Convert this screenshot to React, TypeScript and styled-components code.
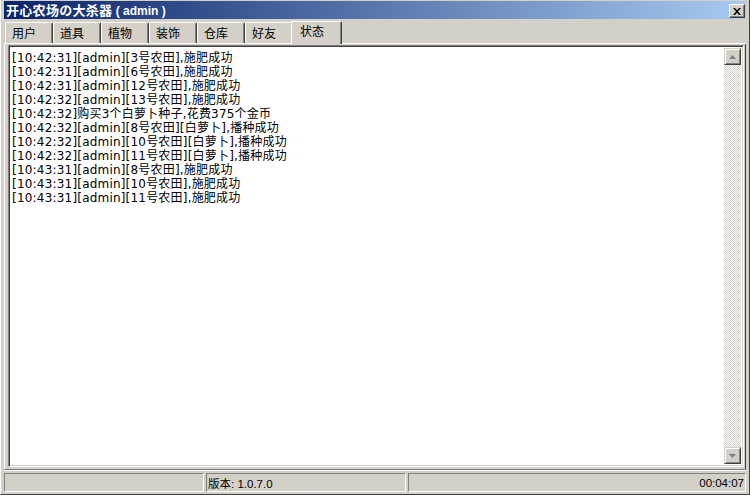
import React from "react";
import styled, { createGlobalStyle, css } from "styled-components";

const GlobalStyle = createGlobalStyle`
  html, body {
    margin: 0;
    padding: 0;
    background: #d4d0c8;
  }
  * {
    box-sizing: border-box;
  }
`;

const TABS = ["用户", "道具", "植物", "装饰", "仓库", "好友", "状态"];
const ACTIVE_TAB = 6;

const LOG_LINES = [
  "[10:42:31][admin][3号农田],施肥成功",
  "[10:42:31][admin][6号农田],施肥成功",
  "[10:42:31][admin][12号农田],施肥成功",
  "[10:42:32][admin][13号农田],施肥成功",
  "[10:42:32]购买3个白萝卜种子,花费375个金币",
  "[10:42:32][admin][8号农田][白萝卜],播种成功",
  "[10:42:32][admin][10号农田][白萝卜],播种成功",
  "[10:42:32][admin][11号农田][白萝卜],播种成功",
  "[10:43:31][admin][8号农田],施肥成功",
  "[10:43:31][admin][10号农田],施肥成功",
  "[10:43:31][admin][11号农田],施肥成功",
];

const raised = css`
  border-top: 1px solid #ffffff;
  border-left: 1px solid #ffffff;
  border-right: 1px solid #404040;
  border-bottom: 1px solid #404040;
  box-shadow: inset -1px -1px 0 #808080;
`;

const App: React.FC = () => {
  return (
    <>
      <GlobalStyle />
      <Window>
        <TitleBar>
          <Title>
            开心农场の大杀器 <TitleUser>( admin )</TitleUser>
          </Title>
          <CloseButton aria-label="close">
            <svg width="8" height="7" viewBox="0 0 8 7">
              <path d="M0 0h2l2 2.2L6 0h2L5 3.5 8 7H6L4 4.8 2 7H0l3-3.5z" fill="#000" />
            </svg>
          </CloseButton>
        </TitleBar>

        <TabStrip>
          {TABS.map((t, i) => (
            <Tab key={t} $active={i === ACTIVE_TAB}>
              {t}
            </Tab>
          ))}
        </TabStrip>

        <Panel>
          <LogBox>
            <LogText>
              {LOG_LINES.map((line, i) => (
                <LogLine key={i}>{line}</LogLine>
              ))}
            </LogText>
            <ScrollBar>
              <ScrollButton>
                <svg width="7" height="4" viewBox="0 0 7 4">
                  <path d="M3.5 0L7 4H0z" fill="#808080" />
                </svg>
              </ScrollButton>
              <ScrollTrack />
              <ScrollButton>
                <svg width="7" height="4" viewBox="0 0 7 4">
                  <path d="M0 0h7L3.5 4z" fill="#808080" />
                </svg>
              </ScrollButton>
            </ScrollBar>
          </LogBox>
        </Panel>

        <StatusBar>
          <StatusPane $width={200} />
          <StatusPane $width={200}>版本: 1.0.7.0</StatusPane>
          <StatusPane $align="right">00:04:07</StatusPane>
        </StatusBar>
      </Window>
    </>
  );
};

export default App;

const Window = styled.div`
  width: 750px;
  height: 495px;
  display: flex;
  flex-direction: column;
  padding: 1px 3px 1px 3px;
  background: #d4d0c8;
  border-left: 1px solid #ffffff;
  border-right: 1px solid #404040;
  border-bottom: 1px solid #404040;
  font-family: "DejaVu Sans", "Noto Sans CJK SC", sans-serif;
  font-size: 12px;
  color: #000;
`;

const TitleBar = styled.div`
  height: 18px;
  flex: none;
  display: flex;
  align-items: center;
  justify-content: space-between;
  padding: 0 1px 0 2px;
  background: linear-gradient(to right, #0a246a, #a6caf0);
`;

const Title = styled.div`
  color: #ffffff;
  font-family: "Noto Sans CJK SC", sans-serif;
  font-weight: 700;
  font-size: 13px;
  line-height: 18px;
  letter-spacing: 0.3px;
  white-space: nowrap;
`;

const TitleUser = styled.span`
  font-family: "Liberation Sans", "Noto Sans CJK SC", sans-serif;
  font-size: 12px;
  letter-spacing: 0;
`;

const CloseButton = styled.div`
  width: 16px;
  height: 14px;
  margin-top: 2px;
  display: flex;
  align-items: center;
  justify-content: center;
  background: #d4d0c8;
  ${raised};
`;

const TabStrip = styled.div`
  height: 25px;
  flex: none;
  display: flex;
  align-items: flex-end;
  padding-left: 1px;
  border-bottom: 1px solid #ffffff;
`;

const Tab = styled.div<{ $active?: boolean }>`
  position: relative;
  width: ${(p) => (p.$active ? 51 : 48)}px;
  height: ${(p) => (p.$active ? 23 : 21)}px;
  margin: 0 ${(p) => (p.$active ? -1 : 0)}px ${(p) => (p.$active ? -1 : 0)}px
    ${(p) => (p.$active ? -2 : 0)}px;
  z-index: ${(p) => (p.$active ? 1 : 0)};
  display: flex;
  align-items: center;
  padding-left: ${(p) => (p.$active ? 8 : 6)}px;
  padding-bottom: ${(p) => (p.$active ? 4 : 1)}px;
  background: #d4d0c8;
  border-top: 1px solid #ffffff;
  border-left: 1px solid #ffffff;
  border-right: 1px solid #404040;
  border-radius: 2px 2px 0 0;
  box-shadow: inset -1px 0 0 #808080;
  font-family: "Noto Sans CJK SC", sans-serif;
  font-size: 12px;
  line-height: 14px;
`;

const Panel = styled.div`
  flex: 1;
  min-height: 0;
  display: flex;
  padding: 1px 1px 2px 3px;
  border-left: 1px solid #ffffff;
  border-right: 1px solid #404040;
`;

const LogBox = styled.div`
  flex: 1;
  display: flex;
  background: #ffffff;
  border-top: 1px solid #808080;
  border-left: 1px solid #808080;
  border-right: 1px solid #ffffff;
  border-bottom: 1px solid #ffffff;
  box-shadow: inset 1px 1px 0 #404040, inset -1px -1px 0 #d4d0c8;
  padding: 2px;
`;

const LogText = styled.div`
  flex: 1;
  padding: 3px 0 0 1px;
  overflow: hidden;
`;

const LogLine = styled.div`
  font-family: "DejaVu Sans", "Noto Sans CJK SC", sans-serif;
  font-size: 12px;
  line-height: 14px;
  letter-spacing: 0.2px;
  white-space: nowrap;
`;

const ScrollBar = styled.div`
  width: 17px;
  flex: none;
  display: flex;
  flex-direction: column;
`;

const ScrollButton = styled.div`
  width: 17px;
  height: 17px;
  flex: none;
  display: flex;
  align-items: center;
  justify-content: center;
  background: #d4d0c8;
  border-top: 1px solid #d4d0c8;
  border-left: 1px solid #d4d0c8;
  border-right: 1px solid #404040;
  border-bottom: 1px solid #404040;
  box-shadow: inset 1px 1px 0 #ffffff, inset -1px -1px 0 #808080;
`;

const ScrollTrack = styled.div`
  flex: 1;
  background: repeating-conic-gradient(#d4d0c8 0 25%, #ffffff 0 50%) 0 0 / 2px 2px;
`;

const StatusBar = styled.div`
  height: 24px;
  flex: none;
  display: flex;
  gap: 2px;
  padding: 3px 0 1px 0;
  border-top: 1px solid #808080;
  box-shadow: inset 0 1px 0 #ffffff;
`;

const StatusPane = styled.div<{ $width?: number; $align?: "left" | "right" }>`
  ${(p) => (p.$width ? `width: ${p.$width}px; flex: none;` : "flex: 1;")}
  display: flex;
  align-items: center;
  justify-content: ${(p) => (p.$align === "right" ? "flex-end" : "flex-start")};
  padding: 0 1px;
  border-top: 1px solid #808080;
  border-left: 1px solid #808080;
  border-right: 1px solid #ffffff;
  border-bottom: 1px solid #ffffff;
  font-family: "Liberation Sans", "Noto Sans CJK SC", sans-serif;
  font-size: 11.5px;
  white-space: nowrap;
`;
